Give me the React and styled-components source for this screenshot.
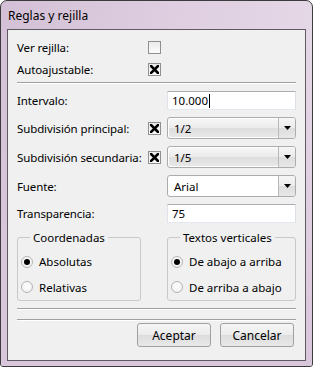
import React from "react";
import styled, { createGlobalStyle } from "styled-components";

const GlobalStyle = createGlobalStyle`
  html, body { margin: 0; padding: 0; background: #ffffff; }
  * { box-sizing: border-box; }
  body { font-family: "Noto Sans", "Open Sans", sans-serif; font-size: 11.5px; color: #000; }
`;

export default function App() {
  return (
    <>
      <GlobalStyle />
      <Window>
        <TitleBar>Reglas y rejilla</TitleBar>
        <Frame>
          <Content>
            <FieldGrid>
              <Label>Ver rejilla:</Label>
              <Check />
              <span />
              <Label>Autoajustable:</Label>
              <Check checked />
              <span />
            </FieldGrid>
            <Separator />
            <FieldGrid $gap={7} $top={8}>
              <Label>Intervalo:</Label>
              <span />
              <TextBox>
                10.000
                <Caret />
              </TextBox>

              <Label>Subdivisión principal:</Label>
              <Check checked />
              <Combo value="1/2" />

              <Label>Subdivisión secundaria:</Label>
              <Check checked />
              <Combo value="1/5" />

              <Label>Fuente:</Label>
              <span />
              <Combo value="Arial" editable />

              <Label>Transparencia:</Label>
              <span />
              <TextBox>75</TextBox>
            </FieldGrid>

            <Groups>
              <GroupBox>
                <Legend>Coordenadas</Legend>
                <Radio checked label="Absolutas" />
                <Radio label="Relativas" />
              </GroupBox>
              <GroupBox>
                <Legend>Textos verticales</Legend>
                <Radio checked label="De abajo a arriba" />
                <Radio label="De arriba a abajo" />
              </GroupBox>
            </Groups>

            <Separator $top={7} />
            <Separator $top={10} />
            <Buttons>
              <Button>Aceptar</Button>
              <Button>Cancelar</Button>
            </Buttons>
          </Content>
        </Frame>
      </Window>
    </>
  );
}

function Check({ checked }) {
  return (
    <CheckBox>
      {checked && (
        <svg width="9" height="9" viewBox="0 0 9 9">
          <path d="M1 1 L8 8 M8 1 L1 8" stroke="#000" strokeWidth="2.6" strokeLinecap="square" />
        </svg>
      )}
    </CheckBox>
  );
}

function Combo({ value, editable }) {
  return (
    <ComboBox>
      <ComboText $editable={editable}>{value}</ComboText>
      <ComboButton>
        <svg width="7" height="4" viewBox="0 0 7 4">
          <path d="M0 0 H7 L3.5 4 Z" fill="#000" />
        </svg>
      </ComboButton>
    </ComboBox>
  );
}

function Radio({ checked, label }) {
  return (
    <RadioRow>
      <RadioDot $checked={checked} />
      <span>{label}</span>
    </RadioRow>
  );
}

const buttonFace = "linear-gradient(180deg, #f6f6f6 0%, #ebebeb 50%, #dddddd 51%, #e8e8e8 100%)";

const Window = styled.div`
  width: 313px;
  height: 367px;
  display: flex;
  flex-direction: column;
  border: 1px solid #3d3a3f;
  border-radius: 7px 7px 3px 3px;
  background: linear-gradient(100deg, #d3c0d6 0%, #dfcfe1 50%, #e7dbe8 100%);
  overflow: hidden;
`;

const TitleBar = styled.div`
  height: 28px;
  padding: 0 0 0 7px;
  display: flex;
  align-items: center;
  font-size: 12px;
  color: #000;
  flex-shrink: 0;
`;

const Frame = styled.div`
  flex: 1;
  display: flex;
  padding: 0 6px 5px 6px;
  background: linear-gradient(180deg, transparent 0%, #d8c6da 100%);
`;

const Content = styled.div`
  flex: 1;
  background: #f0f0f0;
  border: 1px solid #5f5a62;
  padding: 6px 9px 0 9px;
  display: flex;
  flex-direction: column;
`;

const FieldGrid = styled.div`
  display: grid;
  grid-template-columns: 125px 13px 1fr;
  column-gap: 6px;
  row-gap: ${(p) => p.$gap ?? 0}px;
  grid-auto-rows: ${(p) => (p.$gap ? "auto" : "22px")};
  align-items: center;
  margin-top: ${(p) => p.$top ?? 0}px;
`;

const Label = styled.div`
  white-space: nowrap;
  line-height: 15px;
  letter-spacing: -0.12px;
`;

const Separator = styled.div`
  height: 1px;
  margin-top: ${(p) => p.$top ?? 2}px;
  background: #a0a0a0;
  box-shadow: 0 1px 0 #ffffff;
`;

const CheckBox = styled.div`
  width: 13px;
  height: 13px;
  border: 1px solid #8e8f8f;
  background: linear-gradient(180deg, #ebebeb 0%, #fbfbfb 100%);
  display: flex;
  align-items: center;
  justify-content: center;
`;

const TextBox = styled.div`
  height: 19px;
  border: 1px solid;
  border-color: #abadb3 #dbdfe6 #e3e9ef #e2e3ea;
  background: #fff;
  padding: 0 4px;
  display: flex;
  align-items: center;
  line-height: 15px;
`;

const Caret = styled.span`
  display: inline-block;
  width: 1px;
  height: 14px;
  background: #000;
  margin-left: 1px;
`;

const ComboBox = styled.div`
  height: 22px;
  display: flex;
  border: 1px solid #acacac;
  border-radius: 3px;
  background: #fff;
  overflow: hidden;
`;

const ComboText = styled.div`
  flex: 1;
  display: flex;
  align-items: center;
  padding: 0 5px;
  margin: 1px 0 1px 1px;
  border-radius: 2px;
  background: ${(p) => (p.$editable ? "#ffffff" : buttonFace)};
`;

const ComboButton = styled.div`
  width: 17px;
  border-left: 1px solid #b8b8b8;
  display: flex;
  align-items: center;
  justify-content: center;
  background: ${buttonFace};
`;

const Groups = styled.div`
  display: grid;
  grid-template-columns: 124px 1fr;
  column-gap: 26px;
  margin-top: 7px;
`;

const GroupBox = styled.fieldset`
  margin: 0;
  padding: 4px 3px 0 3px;
  height: 71px;
  border: 1px solid #c8c8c8;
  border-radius: 3px;
  display: flex;
  flex-direction: column;
`;

const Legend = styled.legend`
  padding: 0 3px;
  margin-left: 9px;
  line-height: 15px;
`;

const RadioRow = styled.div`
  height: 26px;
  display: flex;
  align-items: center;
  gap: 6px;
`;

const RadioDot = styled.span`
  width: 12px;
  height: 12px;
  border-radius: 50%;
  border: 1px solid #b5b5b5;
  background: radial-gradient(circle at 50% 40%, #ffffff 0%, #ececec 100%);
  display: flex;
  align-items: center;
  justify-content: center;
  &::after {
    content: "";
    display: ${(p) => (p.$checked ? "block" : "none")};
    width: 6px;
    height: 6px;
    border-radius: 50%;
    background: #000;
  }
`;

const Buttons = styled.div`
  display: flex;
  justify-content: flex-end;
  gap: 9px;
  margin-top: 3px;
  padding-right: 2px;
`;

const Button = styled.button`
  width: 74px;
  height: 24px;
  font-family: inherit;
  font-size: 12px;
  color: #000;
  border: 1px solid #a0a0a0;
  border-radius: 3px;
  background: ${buttonFace};
  padding: 0;
`;
